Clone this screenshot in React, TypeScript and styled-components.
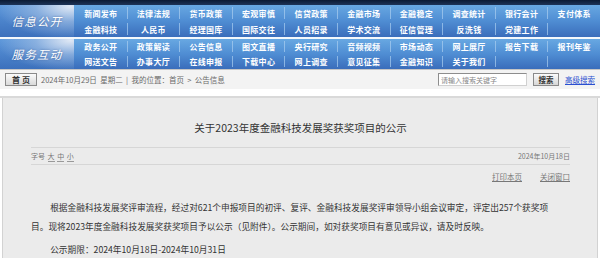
import React from "react";
import styled, { createGlobalStyle } from "styled-components";

const GlobalStyle = createGlobalStyle`
  html, body {
    margin: 0;
    padding: 0;
    background: #ffffff;
  }
  body {
    font-family: "Noto Sans CJK SC", "Liberation Sans", sans-serif;
    color: #333333;
  }
`;

type NavRow = string[];

const infoRows: NavRow[] = [
  ["新闻发布", "法律法规", "货币政策", "宏观审慎", "信贷政策", "金融市场", "金融稳定", "调查统计", "银行会计", "支付体系"],
  ["金融科技", "人民币", "经理国库", "国际交往", "人员招录", "学术交流", "征信管理", "反洗钱", "党建工作", ""],
];

const serviceRows: NavRow[] = [
  ["政务公开", "政策解读", "公告信息", "图文直播", "央行研究", "音频视频", "市场动态", "网上展厅", "报告下载", "报刊年鉴"],
  ["网送文告", "办事大厅", "在线申报", "下载中心", "网上调查", "意见征集", "金融知识", "关于我们", "", ""],
];

const NavBanner = ({
  label,
  rows,
  tall,
}: {
  label: string;
  rows: NavRow[];
  tall?: boolean;
}) => (
  <StBanner $tall={tall}>
    <StLabel>{label}</StLabel>
    <StLinks>
      {rows.map((row, r) =>
        row.map((item, i) => (
          <StNavCell key={`${r}-${i}`} $first={i === 0}>
            {item}
          </StNavCell>
        ))
      )}
    </StLinks>
  </StBanner>
);

const App = () => {
  return (
    <>
      <GlobalStyle />
      <StPage>
        <StTopStrip />
        <NavBanner label="信息公开" rows={infoRows} tall />
        <StWhiteLine />
        <NavBanner label="服务互动" rows={serviceRows} />

        <StCrumbBar>
          <StHomeBtn>首 页</StHomeBtn>
          <StCrumbText>
            2024年10月29日&nbsp; 星期二 &nbsp;|&nbsp; 我的位置：首页 &nbsp;&gt;&nbsp; 公告信息
          </StCrumbText>
          <StSearch>
            <StSearchInput placeholder="请输入搜索关键字" />
            <StSearchBtn>搜索</StSearchBtn>
            <StBlueLink>高级搜索</StBlueLink>
          </StSearch>
        </StCrumbBar>
        <StSpacer />

        <StPanel>
          <StTitle>关于2023年度金融科技发展奖获奖项目的公示</StTitle>
          <StMetaRow>
            <StFontSize>
              字号 <u>大</u> <u>中</u> <u>小</u>
            </StFontSize>
            <span>2024年10月18日</span>
          </StMetaRow>
          <StTools>
            <StGrayLink>打印本页</StGrayLink>
            <StGrayLink>关闭窗口</StGrayLink>
          </StTools>
          <StBody>
            <p>
              根据金融科技发展奖评审流程，经过对621个申报项目的初评、复评、金融科技发展奖评审领导小组会议审定，评定出257个获奖项
              <br />
              目。现将2023年度金融科技发展奖获奖项目予以公示（见附件）。公示期间，如对获奖项目有意见或异议，请及时反映。
            </p>
            <p>公示期限：2024年10月18日-2024年10月31日</p>
          </StBody>
        </StPanel>
      </StPage>
    </>
  );
};

export default App;

const StPage = styled.div`
  width: 600px;
  height: 258px;
  overflow: hidden;
  background: #ffffff;
`;

const StTopStrip = styled.div`
  height: 5px;
  background: linear-gradient(#0b1a33, #1d3458);
`;

const StBanner = styled.div<{ $tall?: boolean }>`
  display: flex;
  height: ${({ $tall }) => ($tall ? "32px" : "30px")};
  background: linear-gradient(#68a8e2 0%, #4f8dd3 50%, #3a6dbb 100%);
`;

const StWhiteLine = styled.div`
  height: 2px;
  background: #f4f8fc;
`;

const StLabel = styled.div`
  width: 74px;
  flex: none;
  display: flex;
  align-items: center;
  justify-content: center;
  color: #ffffff;
  font-size: 11.5px;
  font-style: italic;
  letter-spacing: 1.2px;
  text-shadow: 0 0 2px rgba(30, 60, 120, 0.6);
  background: radial-gradient(
      ellipse at 95% 5%,
      rgba(230, 236, 246, 0.95) 0%,
      rgba(170, 196, 230, 0.6) 35%,
      rgba(120, 160, 215, 0) 75%
    ),
    linear-gradient(#5a96da, #3c70bc);
`;

const StLinks = styled.div`
  flex: 1;
  display: grid;
  grid-template-columns: repeat(10, 1fr);
  grid-template-rows: 1fr 1fr;
`;

const StNavCell = styled.div<{ $first?: boolean }>`
  display: flex;
  align-items: center;
  justify-content: center;
  margin: 2px 0;
  border-left: 1px solid
    ${({ $first }) => ($first ? "transparent" : "rgba(170, 205, 240, 0.7)")};
  color: #ffffff;
  font-size: 8px;
  font-weight: 700;
  letter-spacing: 0.3px;
  white-space: nowrap;
`;

const StCrumbBar = styled.div`
  display: flex;
  align-items: center;
  height: 19px;
  padding: 0 5px;
  border-top: 1px solid #c6c6c6;
  background: #f3f3f3;
  color: #6a6a6a;
  font-size: 7.5px;
`;

const StHomeBtn = styled.button`
  width: 32px;
  height: 13px;
  padding: 0;
  border: 1px solid #8a8a8a;
  background: linear-gradient(#fbfbfb, #d9d9d9);
  color: #333333;
  font-family: inherit;
  font-size: 8px;
  font-weight: 700;
  line-height: 11px;
`;

const StCrumbText = styled.span`
  margin-left: 4px;
  white-space: nowrap;
`;

const StSearch = styled.div`
  margin-left: auto;
  display: flex;
  align-items: center;
  gap: 6px;
`;

const StSearchInput = styled.input`
  width: 83px;
  height: 9px;
  padding: 1px 2px;
  border: 1px solid #8d8d8d;
  border-right-color: #d0d0d0;
  border-bottom-color: #d0d0d0;
  background: #ffffff;
  font-family: inherit;
  font-size: 7px;
  outline: none;
  &::placeholder {
    color: #888888;
  }
`;

const StSearchBtn = styled.button`
  width: 26px;
  height: 13px;
  padding: 0;
  border: 1px solid #8a8a8a;
  background: linear-gradient(#fbfbfb, #d6d6d6);
  color: #333333;
  font-family: inherit;
  font-size: 7.5px;
  font-weight: 700;
  line-height: 11px;
`;

const StBlueLink = styled.a`
  color: #2a4fd0;
  font-size: 7.5px;
  text-decoration: underline;
  white-space: nowrap;
`;

const StSpacer = styled.div`
  height: 7px;
  border-bottom: 2px solid #d9d9d9;
`;

const StPanel = styled.div`
  margin: 0 2px;
  padding: 0 27px 0 28px;
  border: 1px solid #d2d2d2;
  border-top: none;
  background: #ebebeb;
  height: 200px;
`;

const StTitle = styled.h1`
  margin: 0;
  padding-top: 22px;
  text-align: center;
  color: #333333;
  font-size: 10.5px;
  font-weight: 400;
  line-height: 16px;
`;

const StMetaRow = styled.div`
  display: flex;
  align-items: center;
  justify-content: space-between;
  height: 16px;
  margin-top: 11px;
  border-top: 1px solid #d6d6d6;
  border-bottom: 1px solid #d6d6d6;
  color: #777777;
  font-size: 7px;
`;

const StFontSize = styled.span`
  u {
    text-decoration: none;
    border-bottom: 1px solid #999999;
    margin-left: 1px;
  }
`;

const StTools = styled.div`
  display: flex;
  justify-content: flex-end;
  gap: 18px;
  margin-top: 6px;
`;

const StGrayLink = styled.a`
  color: #777777;
  font-size: 7.5px;
  text-decoration: underline;
`;

const StBody = styled.div`
  margin-top: 16px;
  margin-right: -12px;
  color: #333333;
  font-size: 8.7px;
  line-height: 19px;
  p {
    margin: 0 0 4px;
    text-indent: 2.2em;
    white-space: nowrap;
  }
`;
